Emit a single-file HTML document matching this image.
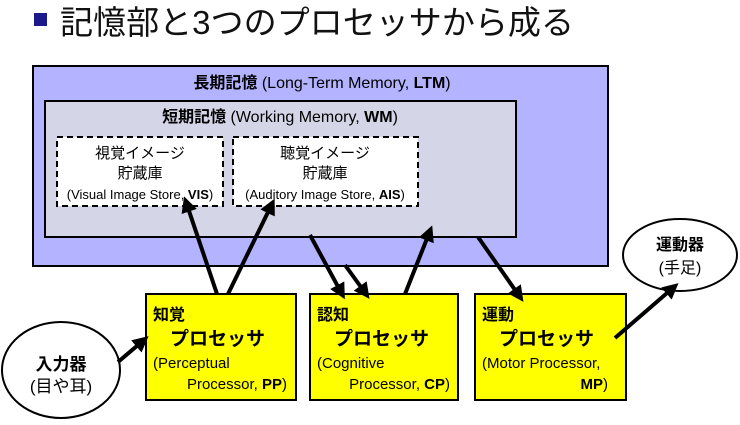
<!DOCTYPE html>
<html><head><meta charset="utf-8"><style>
html,body{margin:0;padding:0;background:#fff;width:740px;height:425px;overflow:hidden}
svg text{font-family:"Liberation Sans Narrow","Liberation Sans","Noto Sans CJK JP",sans-serif}
</style></head><body>
<svg width="740" height="425" viewBox="0 0 740 425" xmlns="http://www.w3.org/2000/svg">
<defs><marker id="a" markerWidth="4" markerHeight="4" refX="2.5" refY="2" orient="auto" markerUnits="strokeWidth"><path d="M0,0 L4,2 L0,4 z" fill="#000"/></marker></defs>
<rect x="34" y="13" width="13" height="13" fill="#1a1a8c"/>
<text x="60" y="34" font-size="33" fill="#111" textLength="514" lengthAdjust="spacingAndGlyphs">記憶部と3つのプロセッサから成る</text>
<rect x="33" y="66" width="575" height="200" fill="#b3b3ff" stroke="#000" stroke-width="2"/>
<text x="322" y="88" font-size="16" text-anchor="middle"><tspan font-weight="bold">長期記憶</tspan> (Long-Term Memory, <tspan font-weight="bold">LTM</tspan>)</text>
<rect x="45" y="101" width="471" height="136" fill="#d5d5e8" stroke="#000" stroke-width="2"/>
<text x="280" y="122" font-size="16" text-anchor="middle"><tspan font-weight="bold">短期記憶</tspan> (Working Memory, <tspan font-weight="bold">WM</tspan>)</text>
<rect x="57" y="137" width="166" height="69" fill="#fff" stroke="#000" stroke-width="2" stroke-dasharray="6,4"/>
<text x="140" y="158" font-size="15" text-anchor="middle">視覚イメージ</text>
<text x="140" y="178" font-size="15" text-anchor="middle">貯蔵庫</text>
<text x="140" y="199" font-size="13" text-anchor="middle">(Visual Image Store, <tspan font-weight="bold">VIS</tspan>)</text>
<rect x="233" y="137" width="185" height="69" fill="#fff" stroke="#000" stroke-width="2" stroke-dasharray="6,4"/>
<text x="325" y="158" font-size="15" text-anchor="middle">聴覚イメージ</text>
<text x="325" y="178" font-size="15" text-anchor="middle">貯蔵庫</text>
<text x="325" y="199" font-size="13" text-anchor="middle">(Auditory Image Store, <tspan font-weight="bold">AIS</tspan>)</text>
<g fill="#ffff00" stroke="#000" stroke-width="2">
<rect x="146" y="294" width="150" height="106"/>
<rect x="310" y="294" width="148" height="106"/>
<rect x="475" y="294" width="151" height="106"/>
<ellipse cx="61" cy="370" rx="59" ry="48" fill="#fff"/>
<ellipse cx="680" cy="255" rx="57" ry="36" fill="#fff"/>
</g>
<g font-size="15">
<text x="153" y="320" font-weight="bold" font-size="16">知覚</text>
<text x="170" y="345" font-weight="bold" font-size="19">プロセッサ</text>
<text x="153" y="368">(Perceptual</text>
<text x="287" y="389" text-anchor="end">Processor, <tspan font-weight="bold">PP</tspan>)</text>
<text x="317" y="320" font-weight="bold" font-size="16">認知</text>
<text x="334" y="345" font-weight="bold" font-size="19">プロセッサ</text>
<text x="317" y="368">(Cognitive</text>
<text x="450" y="389" text-anchor="end">Processor, <tspan font-weight="bold">CP</tspan>)</text>
<text x="482" y="320" font-weight="bold" font-size="16">運動</text>
<text x="499" y="345" font-weight="bold" font-size="19">プロセッサ</text>
<text x="482" y="368">(Motor Processor,</text>
<text x="608" y="389" text-anchor="end" font-weight="bold">MP<tspan font-weight="normal">)</tspan></text>
<text x="61" y="370" text-anchor="middle" font-weight="bold" font-size="17">入力器</text>
<text x="61" y="392" text-anchor="middle" font-size="17">(目や耳)</text>
<text x="680" y="250" text-anchor="middle" font-weight="bold" font-size="16">運動器</text>
<text x="680" y="273" text-anchor="middle" font-size="16">(手足)</text>
</g>
<g stroke="#000" stroke-width="4" marker-end="url(#a)">
<line x1="217" y1="294" x2="186" y2="202"/>
<line x1="228" y1="294" x2="272" y2="204"/>
<line x1="310" y1="235" x2="342" y2="294"/>
<line x1="345" y1="265" x2="366" y2="294"/>
<line x1="405" y1="294" x2="430" y2="231"/>
<line x1="478" y1="237" x2="520" y2="297"/>
<line x1="118" y1="362" x2="144" y2="340"/>
<line x1="615" y1="338" x2="674" y2="287"/>
</g>
</svg>
</body></html>
